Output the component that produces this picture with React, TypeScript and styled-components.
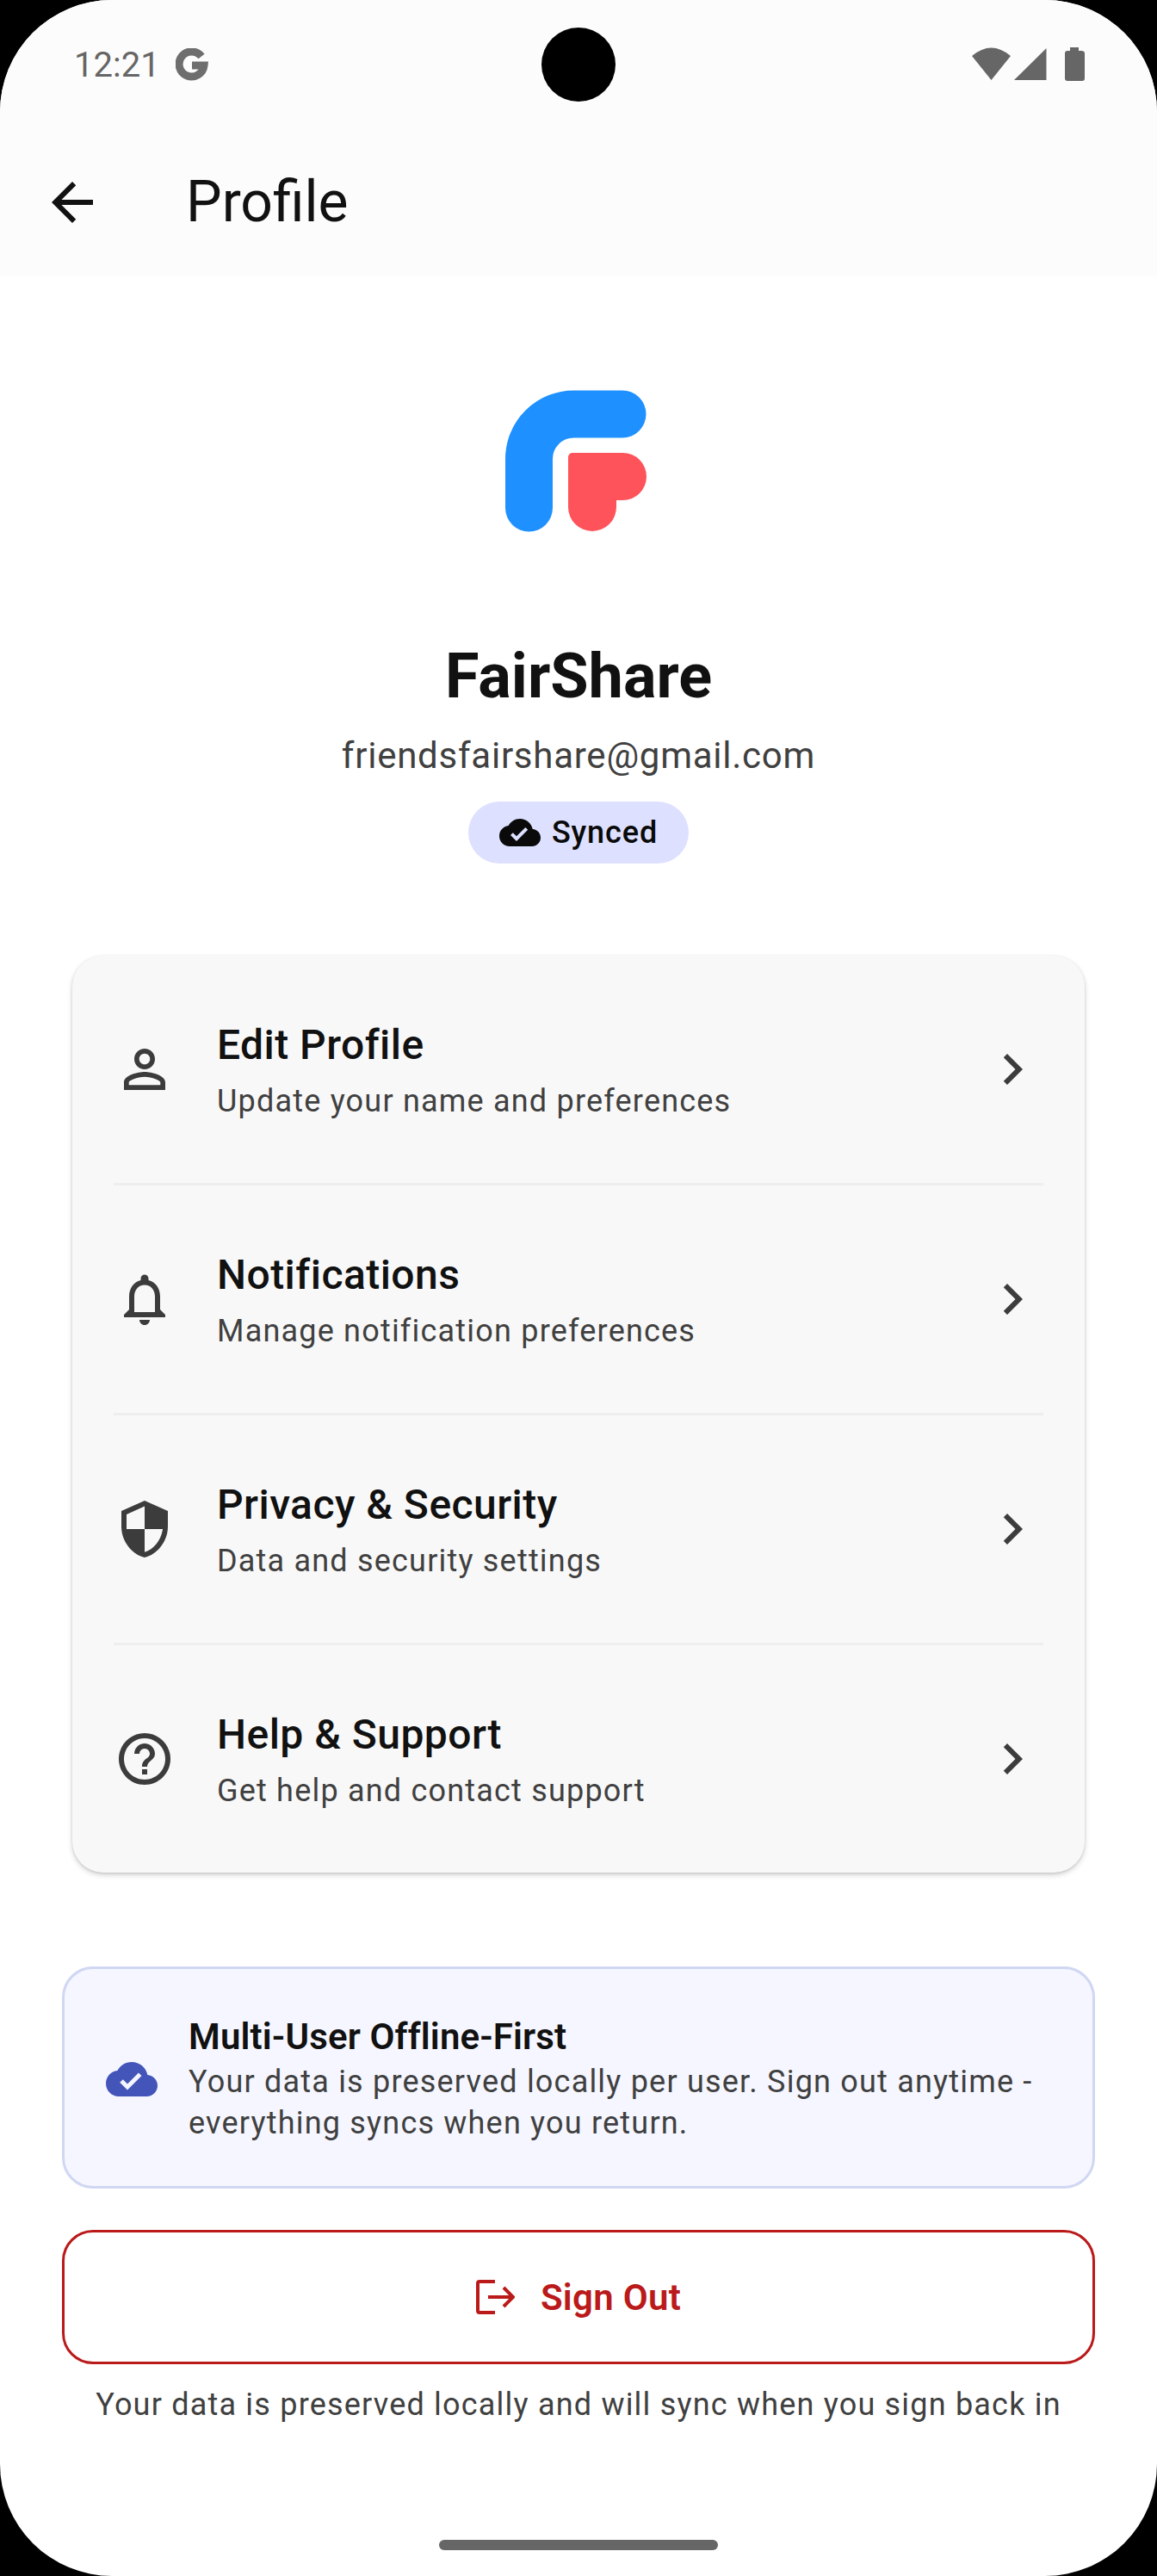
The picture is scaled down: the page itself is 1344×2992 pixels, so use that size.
import React from 'react';
import styled, { createGlobalStyle } from 'styled-components';

const palette = {
  ink: '#111111',
  body: '#404040',
  status: '#666666',
  card: '#f8f8f8',
  divider: '#eeeeee',
  primary: '#4355b9',
  error: '#ba1a1a',
};

const paths = {
  back: 'M20 11H7.83l5.59-5.59L12 4l-8 8 8 8 1.41-1.41L7.83 13H20v-2z',
  cloudDone:
    'M19.35 10.04C18.67 6.59 15.64 4 12 4 9.11 4 6.6 5.64 5.35 8.04 2.34 8.36 0 10.91 0 14c0 3.31 2.69 6 6 6h13c2.76 0 5-2.24 5-5 0-2.64-2.05-4.78-4.65-4.96zM10 17l-3.5-3.5 1.41-1.41L10 14.17 15.18 9l1.41 1.41L10 17z',
  person:
    'M12 5.9c1.16 0 2.1.94 2.1 2.1s-.94 2.1-2.1 2.1S9.9 9.16 9.9 8s.94-2.1 2.1-2.1m0 9c2.97 0 6.1 1.46 6.1 2.1v1.1H5.9V17c0-.64 3.13-2.1 6.1-2.1M12 4C9.79 4 8 5.79 8 8s1.79 4 4 4 4-1.79 4-4-1.79-4-4-4zm0 9c-2.67 0-8 1.34-8 4v3h16v-3c0-2.66-5.33-4-8-4z',
  bell: 'M12 22c1.1 0 2-.9 2-2h-4c0 1.1.9 2 2 2zm6-6v-5c0-3.07-1.63-5.64-4.5-6.32V4c0-.83-.67-1.5-1.5-1.5s-1.5.67-1.5 1.5v.68C7.64 5.36 6 7.92 6 11v5l-2 2v1h16v-1l-2-2zm-2 1H8v-6c0-2.48 1.51-4.5 4-4.5s4 2.02 4 4.5v6z',
  shield:
    'M12 1L3 5v6c0 5.55 3.84 10.74 9 12 5.16-1.26 9-6.45 9-12V5l-9-4zm0 10.99h7c-.53 4.12-3.28 7.79-7 8.94V12H5V6.3l7-3.11v8.8z',
  help: 'M11 18h2v-2h-2v2zm1-16C6.48 2 2 6.48 2 12s4.48 10 10 10 10-4.48 10-10S17.52 2 12 2zm0 18c-4.41 0-8-3.59-8-8s3.59-8 8-8 8 3.59 8 8-3.59 8-8 8zm0-14c-2.21 0-4 1.79-4 4h2c0-1.1.9-2 2-2s2 .9 2 2c0 2-3 1.75-3 5h2c0-2.25 3-2.5 3-5 0-2.21-1.79-4-4-4z',
  chevron: 'M10 6L8.59 7.41 13.17 12l-4.58 4.59L10 18l6-6z',
};

const GlobalStyle = createGlobalStyle`
  html, body {
    margin: 0;
    padding: 0;
    background: #000000;
  }
  body {
    font-family: Roboto, "Liberation Sans", sans-serif;
  }
  * {
    box-sizing: border-box;
  }
`;

const Screen = styled.div`
  position: relative;
  width: 1344px;
  height: 2992px;
  background: #ffffff;
  border-radius: 130px;
  overflow: hidden;
`;

const Header = styled.header`
  height: 320px;
  background: #fcfcfc;
`;

const StatusBar = styled.div`
  display: flex;
  align-items: center;
  justify-content: space-between;
  height: 150px;
  padding: 0 84px 0 86px;
`;

const StatusGroup = styled.div<{ $gap: number }>`
  display: flex;
  align-items: center;
  gap: ${(props) => props.$gap}px;
`;

const Clock = styled.span`
  font-size: 40px;
  line-height: 50px;
  padding-top: 2px;
  color: ${palette.status};
`;

const CameraHole = styled.div`
  position: absolute;
  top: 32px;
  left: 629px;
  width: 86px;
  height: 86px;
  border-radius: 50%;
  background: #000000;
`;

const Toolbar = styled.div`
  display: flex;
  align-items: center;
  gap: 96px;
  height: 170px;
  padding-left: 48px;
`;

const PageTitle = styled.h1`
  margin: 0;
  font-size: 66px;
  font-weight: 400;
  line-height: 84px;
  color: ${palette.ink};
`;

const Icon = styled.svg<{ $size: number; $color: string }>`
  display: block;
  flex: none;
  width: ${(props) => props.$size}px;
  height: ${(props) => props.$size}px;
  fill: ${(props) => props.$color};
`;

const Hero = styled.section`
  display: flex;
  flex-direction: column;
  align-items: center;
  padding-top: 125px;
`;

const Logo = styled.svg`
  display: block;
  width: 180px;
  height: 180px;
`;

const AccountName = styled.h2`
  margin: 113px 0 14px;
  font-size: 72px;
  font-weight: 700;
  line-height: 96px;
  color: ${palette.ink};
`;

const Email = styled.div`
  font-size: 42px;
  line-height: 60px;
  letter-spacing: 0.75px;
  color: ${palette.body};
`;

const SyncChip = styled.div`
  display: flex;
  align-items: center;
  gap: 13px;
  height: 72px;
  margin-top: 23px;
  padding: 0 36px;
  border-radius: 36px;
  background: #dde0ff;
`;

const ChipLabel = styled.span`
  font-size: 36px;
  font-weight: 500;
  line-height: 48px;
  letter-spacing: 0.9px;
  color: #0a0a0a;
`;

const Main = styled.main`
  padding: 107px 72px 0;
`;

const MenuCard = styled.div`
  margin: 0 12px;
  border-radius: 36px;
  background: ${palette.card};
  box-shadow: 0 3px 6px rgba(0, 0, 0, 0.16), 0 1px 3px rgba(0, 0, 0, 0.12);
`;

const MenuRow = styled.div`
  display: flex;
  align-items: center;
  gap: 48px;
  height: 264px;
  padding: 0 48px;
`;

const MenuText = styled.div`
  flex: 1;
  display: flex;
  flex-direction: column;
  gap: 8px;
`;

const MenuTitle = styled.div`
  font-size: 48px;
  font-weight: 500;
  line-height: 66px;
  letter-spacing: 0.45px;
  color: ${palette.ink};
`;

const MenuSubtitle = styled.div`
  font-size: 36px;
  line-height: 48px;
  letter-spacing: 1.2px;
  color: ${palette.body};
`;

const Divider = styled.div`
  height: 3px;
  margin: 0 48px;
  background: ${palette.divider};
`;

const InfoCard = styled.div`
  display: flex;
  align-items: center;
  gap: 36px;
  margin-top: 109px;
  padding: 52px 48px 49px;
  border: 3px solid #d0d7f2;
  border-radius: 36px;
  background: #f5f6ff;
`;

const InfoText = styled.div`
  display: flex;
  flex-direction: column;
  gap: 1px;
`;

const InfoTitle = styled.div`
  font-size: 42px;
  font-weight: 600;
  line-height: 54px;
  letter-spacing: 0.15px;
  color: ${palette.ink};
`;

const InfoBody = styled.div`
  font-size: 36px;
  line-height: 48px;
  letter-spacing: 1.2px;
  color: ${palette.body};
`;

const SignOutButton = styled.button`
  display: flex;
  align-items: center;
  justify-content: center;
  gap: 30px;
  width: 100%;
  height: 156px;
  margin-top: 48px;
  padding: 0;
  border: 3px solid ${palette.error};
  border-radius: 36px;
  background: #ffffff;
  font-family: inherit;
  font-size: 42px;
  font-weight: 600;
  letter-spacing: 0.3px;
  color: ${palette.error};
`;

const SignOutGlyph = styled.svg`
  display: block;
  width: 45px;
  height: 40px;
  fill: none;
  stroke: ${palette.error};
  stroke-width: 4px;
`;

const Footnote = styled.p`
  margin: 23px 0 0;
  font-size: 36px;
  line-height: 48px;
  letter-spacing: 1.2px;
  text-align: center;
  color: ${palette.body};
`;

const HomeIndicator = styled.div`
  width: 324px;
  height: 12px;
  margin: 133px auto 0;
  border-radius: 6px;
  background: ${palette.status};
`;

const menuItems = [
  { icon: paths.person, title: 'Edit Profile', subtitle: 'Update your name and preferences' },
  { icon: paths.bell, title: 'Notifications', subtitle: 'Manage notification preferences' },
  { icon: paths.shield, title: 'Privacy & Security', subtitle: 'Data and security settings' },
  { icon: paths.help, title: 'Help & Support', subtitle: 'Get help and contact support' },
];

const MaterialIcon: React.FC<{ d: string; size: number; color: string }> = ({ d, size, color }) => (
  <Icon viewBox="0 0 24 24" $size={size} $color={color}>
    <path d={d} />
  </Icon>
);

const StatusIcons = () => (
  <svg width="131" height="40" viewBox="0 0 131 40" style={{ display: 'block' }} fill={palette.status}>
    <path d="M22.5 38 L0 10 Q22.5 -9 45 10 Z" />
    <path d="M49 38 H86.5 V1 Z" />
    <path d="M114 0 H124 V4 H127 Q131 4 131 7 V36 Q131 39 128 39 H111 Q108 39 108 36 V7 Q108 4 111 4 H114 Z" />
  </svg>
);

const GoogleMark = () => (
  <svg width="38" height="38" viewBox="0 0 38 38" style={{ display: 'block' }} fill="none">
    <path d="M30 9.5 A14.5 14.5 0 1 0 33 20 H19" stroke="#6e6e6e" strokeWidth="9" />
  </svg>
);

const App: React.FC = () => (
  <>
    <GlobalStyle />
    <Screen>
      <Header>
        <StatusBar>
          <StatusGroup $gap={18}>
            <Clock>12:21</Clock>
            <GoogleMark />
          </StatusGroup>
          <StatusIcons />
        </StatusBar>
        <Toolbar>
          <MaterialIcon d={paths.back} size={72} color={palette.ink} />
          <PageTitle>Profile</PageTitle>
        </Toolbar>
      </Header>
      <CameraHole />

      <Hero>
        <Logo viewBox="0 0 180 180">
          <path
            d="M32.5 145 V88 A52 52 0 0 1 84.5 36 H141"
            fill="none"
            stroke="#1e90ff"
            strokeWidth="55"
            strokeLinecap="round"
          />
          <path
            d="M83 81 H141.5 A27.5 27.5 0 0 1 141.5 136 H134 V144 A28 28 0 0 1 78 144 V86 A5 5 0 0 1 83 81 Z"
            fill="#ff535b"
          />
        </Logo>
        <AccountName>FairShare</AccountName>
        <Email>friendsfairshare@gmail.com</Email>
        <SyncChip>
          <MaterialIcon d={paths.cloudDone} size={48} color="#0a0a0a" />
          <ChipLabel>Synced</ChipLabel>
        </SyncChip>
      </Hero>

      <Main>
        <MenuCard>
          {menuItems.map((item, index) => (
            <React.Fragment key={item.title}>
              {index > 0 && <Divider />}
              <MenuRow>
                <MaterialIcon d={item.icon} size={72} color="#3c3c3c" />
                <MenuText>
                  <MenuTitle>{item.title}</MenuTitle>
                  <MenuSubtitle>{item.subtitle}</MenuSubtitle>
                </MenuText>
                <MaterialIcon d={paths.chevron} size={72} color="#3c3c3c" />
              </MenuRow>
            </React.Fragment>
          ))}
        </MenuCard>

        <InfoCard>
          <MaterialIcon d={paths.cloudDone} size={60} color={palette.primary} />
          <InfoText>
            <InfoTitle>Multi-User Offline-First</InfoTitle>
            <InfoBody>Your data is preserved locally per user. Sign out anytime - everything syncs when you return.</InfoBody>
          </InfoText>
        </InfoCard>

        <SignOutButton>
          <SignOutGlyph viewBox="0 0 45 40">
            <path d="M22 2 H4 Q2 2 2 4 V36 Q2 38 4 38 H22" />
            <path d="M14 20 H42 M32 9 L43 20 L32 31" />
          </SignOutGlyph>
          Sign Out
        </SignOutButton>
        <Footnote>Your data is preserved locally and will sync when you sign back in</Footnote>
      </Main>

      <HomeIndicator />
    </Screen>
  </>
);

export default App;
